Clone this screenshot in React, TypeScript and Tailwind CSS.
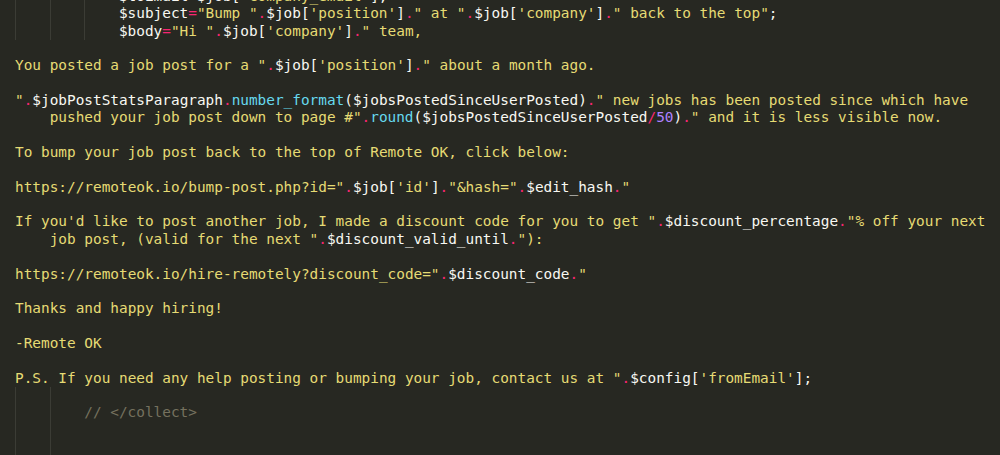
type Tok = [string, string];

interface Line {
  guides?: number;
  wrap?: boolean;
  toks?: Tok[];
}

const colors: Record<string, string> = {
  s: "text-[#e6db74]",
  v: "text-[#f8f8f2]",
  o: "text-[#f92672]",
  f: "text-[#66d9ef]",
  n: "text-[#ae81ff]",
  c: "text-[#75715e]",
};

const lines: Line[] = [
  { guides: 3, toks: [["v", "$toEmail"], ["o", "="], ["v", "$job["], ["s", "'company_email'"], ["v", "];"]] },
  {
    guides: 3,
    toks: [
      ["v", "$subject"], ["o", "="], ["s", '"Bump "'], ["o", "."], ["v", "$job["], ["s", "'position'"], ["v", "]"],
      ["o", "."], ["s", '" at "'], ["o", "."], ["v", "$job["], ["s", "'company'"], ["v", "]"], ["o", "."],
      ["s", '" back to the top"'], ["v", ";"],
    ],
  },
  {
    guides: 3,
    toks: [["v", "$body"], ["o", "="], ["s", '"Hi "'], ["o", "."], ["v", "$job["], ["s", "'company'"], ["v", "]"], ["o", "."], ["s", '" team,']],
  },
  {},
  {
    toks: [["s", 'You posted a job post for a "'], ["o", "."], ["v", "$job["], ["s", "'position'"], ["v", "]"], ["o", "."], ["s", '" about a month ago.']],
  },
  {},
  {
    toks: [
      ["s", '"'], ["o", "."], ["v", "$jobPostStatsParagraph"], ["o", "."], ["f", "number_format"],
      ["v", "($jobsPostedSinceUserPosted)"], ["o", "."], ["s", '" new jobs has been posted since which have'],
    ],
  },
  {
    wrap: true,
    toks: [
      ["s", 'pushed your job post down to page #"'], ["o", "."], ["f", "round"], ["v", "($jobsPostedSinceUserPosted"],
      ["o", "/"], ["n", "50"], ["v", ")"], ["o", "."], ["s", '" and it is less visible now.'],
    ],
  },
  {},
  { toks: [["s", "To bump your job post back to the top of Remote OK, click below:"]] },
  {},
  {
    toks: [
      ["s", 'https://remoteok.io/bump-post.php?id="'], ["o", "."], ["v", "$job["], ["s", "'id'"], ["v", "]"], ["o", "."],
      ["s", '"&hash="'], ["o", "."], ["v", "$edit_hash"], ["o", "."], ["s", '"'],
    ],
  },
  {},
  {
    toks: [
      ["s", 'If you\'d like to post another job, I made a discount code for you to get "'], ["o", "."],
      ["v", "$discount_percentage"], ["o", "."], ["s", '"% off your next'],
    ],
  },
  {
    wrap: true,
    toks: [["s", 'job post, (valid for the next "'], ["o", "."], ["v", "$discount_valid_until"], ["o", "."], ["s", '"):']],
  },
  {},
  {
    toks: [["s", 'https://remoteok.io/hire-remotely?discount_code="'], ["o", "."], ["v", "$discount_code"], ["o", "."], ["s", '"']],
  },
  {},
  { toks: [["s", "Thanks and happy hiring!"]] },
  {},
  { toks: [["s", "-Remote OK"]] },
  {},
  {
    toks: [
      ["s", 'P.S. If you need any help posting or bumping your job, contact us at "'], ["o", "."], ["v", "$config["],
      ["s", "'fromEmail'"], ["v", "];"],
    ],
  },
  { guides: 2 },
  { guides: 2, toks: [["c", "// </collect>"]] },
  { guides: 2 },
  { guides: 2 },
];

const CodeLine = ({ line }: { line: Line }) => {
  const guides = Array.from({ length: line.guides ?? 0 });
  return (
    <div className="flex h-[17.35px] whitespace-pre">
      {guides.map((_, i) => (
        <span key={i} className="w-[4ch] shrink-0 border-l border-[#3b3c35]" />
      ))}
      {line.wrap && <span className="w-[4ch] shrink-0" />}
      {line.toks?.map(([k, t], i) => (
        <span key={i} className={colors[k]}>
          {t}
        </span>
      ))}
    </div>
  );
};

export default function App() {
  return (
    <div className="h-[455px] w-[1000px] overflow-hidden bg-[#272822]">
      <div
        className="mt-[-12px] pl-[15px] text-[14.4px] leading-[17.35px] text-[#f8f8f2]"
        style={{ fontFamily: '"DejaVu Sans Mono", "Liberation Mono", monospace' }}
      >
        {lines.map((l, i) => (
          <CodeLine key={i} line={l} />
        ))}
      </div>
    </div>
  );
}
